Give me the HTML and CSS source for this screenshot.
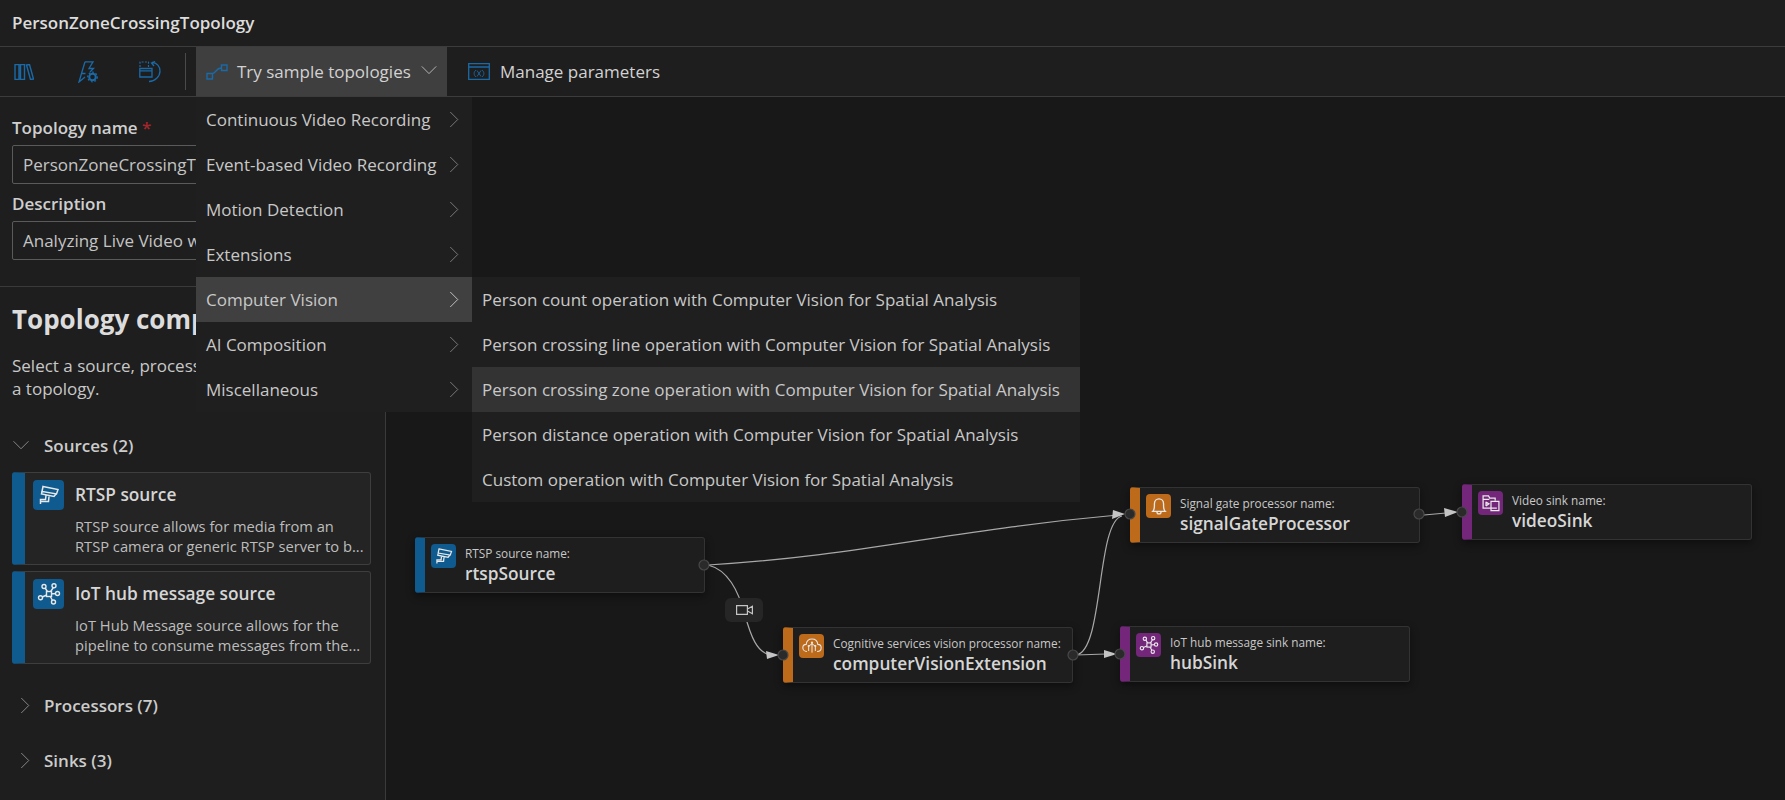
FILE: index.html
```html
<!DOCTYPE html>
<html lang="en">
<head>
    <meta charset="UTF-8">
    <title>PersonZoneCrossingTopology</title>
    <link rel="stylesheet" href="styles.css">
</head>
<body>
    <svg class="defs" width="0" height="0">
        <symbol id="ic-camera" viewBox="0 0 24 24">
            <path d="M6 3.500 21 6.500 19.500 11 5 8.500zM5 8.500 4.500 11 17 13.500 19 11M9 12.500 8.500 16.500H3.500V21M3.500 18.500H11.500L12 13.500" fill="none" stroke="currentColor" stroke-width="1.500"/>
        </symbol>
        <symbol id="ic-hub" viewBox="0 0 24 24">
            <g fill="none" stroke="currentColor" stroke-width="1.400">
                <path d="M12 12 7.500 5M12 12 17 4.500M12 12 20.500 11.500M12 12 16 19.500M12 12 4 15.500"/>
                <rect x="9.500" y="9.500" width="5" height="5" fill="#0f5a8f"/>
                <circle cx="7" cy="4.500" r="2" fill="#0f5a8f"/>
                <circle cx="17" cy="3.800" r="2" fill="#0f5a8f"/>
                <circle cx="20.500" cy="11.500" r="2" fill="#0f5a8f"/>
                <circle cx="16.500" cy="20" r="2" fill="#0f5a8f"/>
                <circle cx="3.500" cy="15.800" r="2" fill="#0f5a8f"/>
            </g>
        </symbol>
        <symbol id="ic-hub-sink" viewBox="0 0 24 24">
            <g fill="none" stroke="currentColor" stroke-width="1.400">
                <path d="M12 12 7.500 5M12 12 17 4.500M12 12 20.500 11.500M12 12 16 19.500M12 12 4 15.500"/>
                <rect x="9.500" y="9.500" width="5" height="5" fill="#74267b"/>
                <circle cx="7" cy="4.500" r="2" fill="#74267b"/>
                <circle cx="17" cy="3.800" r="2" fill="#74267b"/>
                <circle cx="20.500" cy="11.500" r="2" fill="#74267b"/>
                <circle cx="16.500" cy="20" r="2" fill="#74267b"/>
                <circle cx="3.500" cy="15.800" r="2" fill="#74267b"/>
            </g>
        </symbol>
        <symbol id="ic-right" viewBox="0 0 12 20">
            <path d="M1.500 1 10.500 10 1.500 19" fill="none" stroke="currentColor" stroke-width="1"/>
        </symbol>
        <symbol id="ic-down" viewBox="0 0 20 12">
            <path d="M1 1.500 10 10.500 19 1.500" fill="none" stroke="currentColor" stroke-width="1"/>
        </symbol>
    </svg>

    <header class="titlebar">PersonZoneCrossingTopology</header>

    <nav class="toolbar">
        <button class="tool-icon tool-library">
            <svg width="20" height="16" viewBox="0 0 20 16"><path d="M1 .5H5V15.500H1zM6.500 .5H10.500V15.500H6.500zM12.500 1 15.500 .5 19.500 15 16.500 15.500z" fill="none" stroke="currentColor" stroke-width="1.400"/></svg>
        </button>
        <button class="tool-icon tool-flash">
            <svg width="20" height="22" viewBox="0 0 20 22"><path d="M7 .8H15L11 7.500H15.500L12 11M7.500 12.500H3.500L1 21 7 16" fill="none" stroke="currentColor" stroke-width="1.300"/><path d="M7 .8 3.500 12.500" fill="none" stroke="currentColor" stroke-width="1.300"/><circle cx="14.500" cy="16" r="3.300" fill="none" stroke="currentColor" stroke-width="2"/><circle cx="14.500" cy="16" r="4.800" fill="none" stroke="currentColor" stroke-width="1.200" stroke-dasharray="1.800 1.800"/></svg>
        </button>
        <button class="tool-icon tool-undo">
            <svg width="22" height="22" viewBox="0 0 22 22"><path d="M1 6V1H9.500V6" fill="none" stroke="currentColor" stroke-width="1.200" stroke-dasharray="2 1.300"/><path d="M.8 7.500H13V16H.8zM.8 9.800H13" fill="none" stroke="currentColor" stroke-width="1.300"/><path d="M13 1.500C18 1.500 21 5.500 21 10 21 15.500 16 20.500 10 20.500M16 .5 12.500 2 15 5" fill="none" stroke="currentColor" stroke-width="1.300"/></svg>
        </button>
        <span class="tool-sep"></span>
        <div class="sample">
            <button class="sample-btn">
                <svg class="sample-ic" width="22" height="16" viewBox="0 0 22 16"><path d="M1 9.500H6.500V15H1zM15.500 1H21V6.500H15.500zM6.500 9.500C10 9 10.500 3.500 15.500 4" fill="none" stroke="currentColor" stroke-width="1.400"/></svg>
                <span>Try sample topologies</span>
                <svg class="sample-chev" width="16" height="10"><use href="#ic-down"/></svg>
            </button>
            <ul class="menu">
                <li>Continuous Video Recording<svg class="chev" width="10" height="17"><use href="#ic-right"/></svg></li>
                <li>Event-based Video Recording<svg class="chev" width="10" height="17"><use href="#ic-right"/></svg></li>
                <li>Motion Detection<svg class="chev" width="10" height="17"><use href="#ic-right"/></svg></li>
                <li>Extensions<svg class="chev" width="10" height="17"><use href="#ic-right"/></svg></li>
                <li class="hover">Computer Vision<svg class="chev" width="10" height="17"><use href="#ic-right"/></svg></li>
                <li>AI Composition<svg class="chev" width="10" height="17"><use href="#ic-right"/></svg></li>
                <li>Miscellaneous<svg class="chev" width="10" height="17"><use href="#ic-right"/></svg></li>
            </ul>
            <ul class="submenu">
                <li>Person count operation with Computer Vision for Spatial Analysis</li>
                <li>Person crossing line operation with Computer Vision for Spatial Analysis</li>
                <li class="hover">Person crossing zone operation with Computer Vision for Spatial Analysis</li>
                <li>Person distance operation with Computer Vision for Spatial Analysis</li>
                <li>Custom operation with Computer Vision for Spatial Analysis</li>
            </ul>
        </div>
        <button class="params-btn">
            <svg width="22" height="17" viewBox="0 0 22 17"><path d="M.7 .7H21.300V16.300H.7zM.7 4H21.300" fill="none" stroke="currentColor" stroke-width="1.300"/><path d="M8 7C5.500 9 5.500 12 8 14M14 7C16.500 9 16.500 12 14 14M9 7.500 13 13.500M13 7.500 9 13.500" fill="none" stroke="currentColor" stroke-width=".9"/></svg>
            <span>Manage parameters</span>
        </button>
    </nav>

    <main class="main">
        <aside class="panel">
            <section class="form">
                <label class="field-label">Topology name <span class="req">*</span></label>
                <div class="field">PersonZoneCrossingTopology</div>
                <label class="field-label field-label-2">Description</label>
                <div class="field">Analyzing Live Video with Computer Vision for Spatial Analysis</div>
            </section>
            <section class="components">
                <h2>Topology components</h2>
                <p class="intro">Select a source, processor, and sink to create<br>a topology.</p>

                <div class="group group-open">
                    <svg width="18" height="10"><use href="#ic-down"/></svg>
                    <span>Sources (2)</span>
                </div>
                <article class="card">
                    <div class="badge"><svg width="24" height="24"><use href="#ic-camera"/></svg></div>
                    <div>
                        <h3>RTSP source</h3>
                        <p>RTSP source allows for media from an RTSP camera or generic RTSP server to b...</p>
                    </div>
                </article>
                <article class="card">
                    <div class="badge"><svg width="24" height="24"><use href="#ic-hub"/></svg></div>
                    <div>
                        <h3>IoT hub message source</h3>
                        <p>IoT Hub Message source allows for the pipeline to consume messages from the...</p>
                    </div>
                </article>

                <div class="group group-proc">
                    <svg width="10" height="17"><use href="#ic-right"/></svg>
                    <span>Processors (7)</span>
                </div>
                <div class="group group-sink">
                    <svg width="10" height="17"><use href="#ic-right"/></svg>
                    <span>Sinks (3)</span>
                </div>
            </section>
        </aside>

        <div class="canvas">
            <div class="node node-source n-rtsp">
                <div class="node-ic"><svg width="20" height="20"><use href="#ic-camera"/></svg></div>
                <div><div class="node-label">RTSP source name:</div><div class="node-name">rtspSource</div></div>
            </div>
            <div class="node node-proc n-cv">
                <div class="node-ic">
                    <svg width="20" height="20" viewBox="0 0 24 24"><path d="M6 18.500C2.500 18.500 1 16 1 14 1 11.500 3 10 5 10 5.500 6 8.500 3.500 12 3.500 15.500 3.500 18.500 6 19 10 21.500 10 23 12 23 14 23 16.500 21 18.500 18 18.500" fill="none" stroke="currentColor" stroke-width="1.300"/><path d="M12 8V20M8 12V18M16 12V18M8 12 12 9.500M16 12 12 9.500" fill="none" stroke="currentColor" stroke-width="1.200"/><circle cx="12" cy="8" r="1.300" fill="currentColor"/><circle cx="8" cy="12" r="1.300" fill="currentColor"/><circle cx="16" cy="12" r="1.300" fill="currentColor"/></svg>
                </div>
                <div><div class="node-label">Cognitive services vision processor name:</div><div class="node-name">computerVisionExtension</div></div>
            </div>
            <div class="node node-sink n-hub">
                <div class="node-ic"><svg width="20" height="20"><use href="#ic-hub-sink"/></svg></div>
                <div><div class="node-label">IoT hub message sink name:</div><div class="node-name">hubSink</div></div>
            </div>
            <div class="node node-proc n-gate">
                <div class="node-ic">
                    <svg width="20" height="20" viewBox="0 0 24 24"><path d="M4.500 18.500H19.500C18 17 17.500 15 17.500 12V9.500C17.500 6 15 3.500 12 3.500 9 3.500 6.500 6 6.500 9.500V12C6.500 15 6 17 4.500 18.500ZM9.500 18.500C9.500 20 10.500 21.500 12 21.500 13.500 21.500 14.500 20 14.500 18.500" fill="none" stroke="currentColor" stroke-width="1.600"/></svg>
                </div>
                <div><div class="node-label">Signal gate processor name:</div><div class="node-name">signalGateProcessor</div></div>
            </div>
            <div class="node node-sink n-video">
                <div class="node-ic">
                    <svg width="20" height="20" viewBox="0 0 24 24"><path d="M17 18H2.500V3.500H9L10.500 6H17V9M2.500 7.500H10M6 10.500V15.500M6 11 9.500 13 6 15.500M12 10H21.500V21H12zM15 18H19" fill="none" stroke="currentColor" stroke-width="1.500"/></svg>
                </div>
                <div><div class="node-label">Video sink name:</div><div class="node-name">videoSink</div></div>
            </div>

            <svg class="edges" width="1399" height="703" viewBox="386 97 1399 703">
                <g class="edge">
                    <path d="M708 565C860 556 950 530 1118 515"/>
                    <path d="M708 565C728 570 738 590 745 615C751 637 757 652 770 655"/>
                    <path d="M1076 655C1104 652 1096 522 1122 516"/>
                    <path d="M1076 655 1106 654"/>
                    <path d="M1424 515 1446 513"/>
                </g>
                <g class="arrow">
                    <path d="M766 651 779 655 767 659z"/>
                    <path d="M1104 650 1117 654 1104 658z"/>
                    <path d="M1113 510 1125 514 1112 519z"/>
                    <path d="M1444 508 1458 512 1445 517z"/>
                </g>
                <g class="port">
                    <circle cx="704" cy="565" r="5"/>
                    <circle cx="783" cy="655" r="5"/>
                    <circle cx="1073" cy="655" r="5"/>
                    <circle cx="1120" cy="654" r="5"/>
                    <circle cx="1130" cy="514" r="5"/>
                    <circle cx="1419" cy="514" r="5"/>
                    <circle cx="1462" cy="512" r="5"/>
                </g>
            </svg>

            <div class="edge-label">
                <svg width="17" height="10" viewBox="0 0 17 10"><path d="M.6 .6H11.400V9.400H.6zM11.500 4 16.400 1.200V8.800L11.500 6" fill="none" stroke="currentColor" stroke-width="1.200"/></svg>
            </div>
        </div>
    </main>
</body>
</html>
```

FILE: styles.css
```css
* {
    box-sizing: border-box;
}

html, body {
    margin: 0;
    height: 800px;
    overflow: hidden;
}

body {
    background-color: #1e1e1e;
    color: #d2d2d2;
    font-family: "Open Sans", "Noto Sans", sans-serif;
    font-size: 17px;
    display: flex;
    flex-direction: column;
}

.defs {
    position: absolute;
}

button {
    background: none;
    border: none;
    color: inherit;
    font: inherit;
    padding: 0;
}

ul {
    list-style: none;
    margin: 0;
    padding: 0;
}

/* top bars */
.titlebar {
    height: 47px;
    flex: none;
    padding-left: 12px;
    line-height: 46px;
    font-weight: 600;
    color: #dcdcdc;
    border-bottom: 1px solid #3c3c3c;
}

.toolbar {
    height: 50px;
    flex: none;
    display: flex;
    align-items: center;
    border-bottom: 1px solid #3c3c3c;
    color: #1a6aa8;
}

.tool-icon {
    display: flex;
    align-items: center;
}

.tool-library {
    margin-left: 14px;
}

.tool-flash {
    margin-left: 44px;
}

.tool-undo {
    margin-left: 41px;
}

.tool-sep {
    width: 1px;
    height: 37px;
    margin-left: 24px;
    background-color: #4a4a4a;
}

.sample {
    margin-left: 10px;
    position: relative;
    height: 49px;
    width: 251px;
}

.sample-btn {
    width: 100%;
    height: 49px;
    display: flex;
    align-items: center;
    padding-left: 10px;
    background-color: #3f3f3f;
}

.sample-btn span {
    margin-left: 9px;
    color: #d2d2d2;
}

.sample-chev {
    margin-left: 10px;
    margin-bottom: 3px;
    color: #d2d2d2;
}

.params-btn {
    display: flex;
    align-items: center;
    margin-left: 21px;
}

.params-btn span {
    margin-left: 10px;
    color: #d2d2d2;
}

/* dropdown */
.menu, .submenu {
    position: absolute;
    background-color: #1f1f1f;
    color: #c8c8c8;
    z-index: 5;
}

.menu {
    left: 0;
    top: 50px;
    width: 276px;
}

.submenu {
    left: 276px;
    top: 230px;
    width: 608px;
}

.menu li, .submenu li {
    height: 45px;
    display: flex;
    align-items: center;
    justify-content: space-between;
    padding-left: 10px;
    padding-bottom: 1px;
    white-space: nowrap;
}

.menu li {
    padding-right: 13px;
}

.menu .hover {
    background-color: #404040;
}

.submenu .hover {
    background-color: #333;
}

.chev {
    flex: none;
    color: #8a8a8a;
}

.menu .hover .chev {
    color: #d8d8d8;
}

/* main area */
.main {
    flex: 1;
    display: flex;
    min-height: 0;
}

.panel {
    width: 386px;
    flex: none;
    border-right: 1px solid #3a3a3a;
    overflow: hidden;
}

.form {
    height: 190px;
    padding: 21px 12px 0;
    border-bottom: 1px solid #3a3a3a;
}

.field-label {
    display: block;
    line-height: 20px;
    font-weight: 600;
    color: #cfcfcf;
}

.field-label-2 {
    margin-top: 10px;
}

.req {
    color: #a4262c;
}

.field {
    height: 39px;
    margin-top: 7px;
    width: 361px;
    padding: 0 10px;
    line-height: 37px;
    border: 1px solid #5a5a5a;
    border-radius: 2px;
    color: #c4c4c4;
    white-space: nowrap;
    overflow: hidden;
}

.components {
    padding: 16px 12px 0;
}

.components h2 {
    margin: 0;
    font-size: 26px;
    line-height: 32px;
    font-weight: 700;
    color: #dcdcdc;
    white-space: nowrap;
}

.intro {
    margin: 19px 0 0;
    line-height: 23px;
    color: #c8c8c8;
    white-space: nowrap;
}

.group {
    height: 30px;
    display: flex;
    align-items: center;
    font-weight: 600;
    color: #cccccc;
}

.group svg {
    color: #9a9a9a;
    flex: none;
}

.group span {
    margin-left: 14px;
}

.group-open {
    margin-top: 30px;
    margin-bottom: 12px;
}

.group-proc {
    margin-top: 26px;
    padding-left: 8px;
}

.group-sink {
    margin-top: 25px;
    padding-left: 8px;
}

.card {
    width: 359px;
    height: 93px;
    margin-bottom: 6px;
    display: flex;
    gap: 11px;
    padding: 7px 0 0 8px;
    background-color: #242424;
    border: 1px solid #3e3e3e;
    border-left: 13px solid #0f5a8f;
    border-radius: 3px;
}

.badge {
    width: 31px;
    height: 30px;
    flex: none;
    display: flex;
    align-items: center;
    justify-content: center;
    background-color: #0f5a8f;
    color: #e8e8e8;
    border-radius: 4px;
}

.card h3 {
    margin: 0;
    font-size: 17.300px;
    line-height: 30px;
    font-weight: 600;
    color: #d6d6d6;
}

.card p {
    margin: 6px 0 0;
    width: 290px;
    font-size: 14.700px;
    line-height: 20px;
    color: #bdbdbd;
}

/* diagram */
.canvas {
    flex: 1;
    position: relative;
    background-color: #181818;
}

.node {
    position: absolute;
    width: 290px;
    height: 56px;
    display: flex;
    gap: 9px;
    padding: 6px 0 0 6px;
    background-color: #1e1e1e;
    border: 1px solid #333;
    border-left-width: 10px;
    border-radius: 3px;
    box-shadow: 0 3px 8px rgba(0, 0, 0, .45);
}

.node-source {
    border-left-color: #0f5a8f;
}

.node-proc {
    border-left-color: #bd6a1b;
}

.node-sink {
    border-left-color: #74267b;
}

.node-ic {
    width: 25px;
    height: 24px;
    flex: none;
    display: flex;
    align-items: center;
    justify-content: center;
    border-radius: 4px;
    color: #e8e8e8;
}

.node-source .node-ic {
    background-color: #0f5a8f;
}

.node-proc .node-ic {
    background-color: #bd6a1b;
}

.node-sink .node-ic {
    background-color: #74267b;
}

.node-label {
    font-size: 11.800px;
    line-height: 18px;
    color: #c8c8c8;
    white-space: nowrap;
}

.node-name {
    font-size: 17.300px;
    line-height: 23px;
    font-weight: 600;
    color: #d6d6d6;
    white-space: nowrap;
}

.n-rtsp {
    left: 29px;
    top: 440px;
}

.n-cv {
    left: 397px;
    top: 530px;
}

.n-hub {
    left: 734px;
    top: 529px;
}

.n-gate {
    left: 744px;
    top: 390px;
}

.n-video {
    left: 1076px;
    top: 387px;
}

.edges {
    position: absolute;
    left: 0;
    top: 0;
}

.edge path {
    fill: none;
    stroke: #a8a8a8;
    stroke-width: 1.200;
}

.arrow path {
    fill: #c4c4c4;
}

.port circle {
    fill: #2a2a2a;
    stroke: #484848;
    stroke-width: 1.200;
}

.edge-label {
    position: absolute;
    left: 339px;
    top: 501px;
    width: 38px;
    height: 24px;
    display: flex;
    align-items: center;
    justify-content: center;
    background-color: #262626;
    border-radius: 6px;
    color: #c4c4c4;
}
```
